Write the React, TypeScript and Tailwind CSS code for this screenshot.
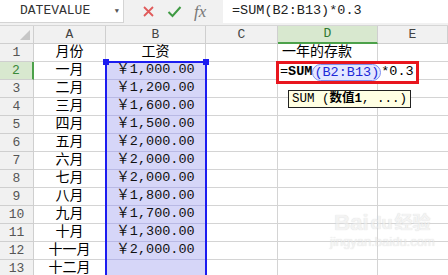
import React from "react";

const mono = { fontFamily: '"Liberation Mono", "Noto Sans CJK SC", monospace' };

const months = ["一月", "二月", "三月", "四月", "五月", "六月", "七月", "八月", "九月", "十月", "十一月", "十二月"];
const wages = ["1,000.00", "1,200.00", "1,600.00", "1,500.00", "2,000.00", "2,000.00", "2,000.00", "1,800.00", "1,700.00", "1,300.00", "2,000.00", ""];

const cols = ["A", "B", "C", "D", "E"];

function FormulaBar() {
  return (
    <div className="flex h-[26px] bg-[#f1f1f1] border-b border-[#d6d6d6]">
      <div className="flex h-[23px] w-[124px] items-center justify-between bg-white border-r border-b border-[#d4d4d4] pl-[20px] pr-[4px]">
        <span className="text-[13px] text-[#333]">DATEVALUE</span>
        <span className="text-[7px] text-[#555]">▼</span>
      </div>
      <div className="flex h-[23px] w-[99px] items-center gap-[12px] pl-[18px]">
        <svg width="13" height="13" viewBox="0 0 13 13">
          <path d="M2 2 L11 11 M11 2 L2 11" stroke="#e05a5a" strokeWidth="1.8" />
        </svg>
        <svg width="15" height="13" viewBox="0 0 15 13">
          <path d="M1.5 7 L5.5 11 L13.5 2" stroke="#3f9a43" strokeWidth="2" fill="none" />
        </svg>
        <span className="text-[17px] italic text-[#777]" style={{ fontFamily: '"Liberation Serif", serif' }}>
          fx
        </span>
      </div>
      <div className="flex h-[23px] flex-1 items-center bg-white pl-[9px]">
        <span className="text-[13.5px] text-[#222]">=SUM(B2:B13)*0.3</span>
      </div>
    </div>
  );
}

function Sheet() {
  return (
    <div className="relative grid grid-cols-[34px_72px_100px_72px_100px_70px] auto-rows-[18px]">
      {/* header row */}
      <div className="relative bg-[#f1f1f1] border-r border-b border-[#cfcfcf]">
        <svg className="absolute right-[3px] bottom-[3px]" width="10" height="10" viewBox="0 0 10 10">
          <path d="M10 0 L10 10 L0 10 Z" fill="#c6c6c6" />
        </svg>
      </div>
      {cols.map((c) =>
        c === "D" ? (
          <div key={c} className="flex items-center justify-center bg-[#d8e8cf] border-r border-[#cfcfcf] border-b-2 border-b-[#4ca14a] text-[13px] text-[#2f7a2f]">
            {c}
          </div>
        ) : (
          <div key={c} className="flex items-center justify-center bg-[#f1f1f1] border-r border-b border-[#cfcfcf] text-[13px] text-[#444]">
            {c}
          </div>
        )
      )}
      {Array.from({ length: 13 }).map((_, i) => {
        const r = i + 1;
        const inSel = r >= 2;
        return (
          <React.Fragment key={r}>
            {r === 2 ? (
              <div className="flex items-center justify-center bg-[#d8e8cf] border-r-2 border-r-[#4ca14a] border-b border-[#cfcfcf] text-[13px] text-[#3a8a3a]">
                {r}
              </div>
            ) : (
              <div className="flex items-center justify-center bg-[#f1f1f1] border-r border-b border-[#cfcfcf] text-[13px] text-[#555]">
                {r}
              </div>
            )}
            <div className="flex items-center justify-center border-r border-b border-[#d4d4d4] text-[14px] text-black">
              {r === 1 ? "月份" : months[r - 2]}
            </div>
            <div
              className={
                inSel
                  ? "flex items-center justify-center bg-[#d6d6f8] border-r border-b border-[#b9b9e4] text-[13.5px] text-[#111]"
                  : "flex items-center justify-center border-r border-b border-[#d4d4d4] text-[14px] text-black"
              }
            >
              {r === 1 ? "工资" : wages[r - 2] ? "￥" + wages[r - 2] : ""}
            </div>
            <div className="border-r border-b border-[#d4d4d4]" />
            <div className="flex items-center border-r border-b border-[#d4d4d4] pl-[4px] text-[14px] text-black">
              {r === 1 ? "一年的存款" : ""}
            </div>
            <div className="border-b border-[#d4d4d4]" />
          </React.Fragment>
        );
      })}

      {/* selection border B2:B13 */}
      <div className="pointer-events-none absolute left-[105px] top-[35px] h-[240px] w-[102px] border-2 border-[#1c1cf0]" />
      <div className="absolute left-[103px] top-[33px] h-[6px] w-[6px] bg-[#1c1cf0]" />
      <div className="absolute left-[203px] top-[33px] h-[6px] w-[6px] bg-[#1c1cf0]" />

      {/* active cell D2 edit with red highlight */}
      <div className="absolute left-[276px] top-[35px] h-[20px] w-[103px] border-2 border-[#4ca14a]" />
      <div className="absolute left-[276px] top-[35px] flex h-[23px] w-[143px] items-center border-[3px] border-[#e8161e] bg-white pl-[1px] text-[13.5px] text-black whitespace-nowrap">
        <span>=</span>
        <span className="font-bold">SUM</span>
        <span className="rounded-full border border-[#7f8ff0] bg-[#e3e8ff] px-[1px] leading-[15px] text-[#1d2ad8]">(B2:B13)</span>
        <span>*0.3</span>
      </div>

      {/* function tooltip */}
      <div className="absolute left-[288px] top-[64px] flex h-[18px] items-center border border-[#222] bg-[#ffffe3] pl-[3px] pr-[3px] text-[12.5px] text-black whitespace-nowrap">
        SUM (<span className="font-bold">数值1</span>, ...)
      </div>

      {/* watermark */}
      <div className="pointer-events-none absolute left-[330px] top-[186px] flex flex-col items-center opacity-60">
        <div className="flex items-end gap-[2px] text-[22px] font-bold leading-[22px] text-[#ececec]" style={{ fontFamily: '"Liberation Sans", "Noto Sans CJK SC", sans-serif', textShadow: "0 0 1px #bdbdbd" }}>
          <span>Bai</span>
          <span className="text-[18px]">du</span>
          <span className="text-[18px]">经验</span>
        </div>
        <div className="text-[13px] leading-[16px] text-[#ececec]" style={{ fontFamily: '"Liberation Sans", sans-serif', textShadow: "0 0 1px #c4c4c4" }}>
          jingyan.baidu.com
        </div>
      </div>
    </div>
  );
}

export default function App() {
  return (
    <div className="h-[275px] w-[448px] overflow-hidden bg-white" style={mono}>
      <FormulaBar />
      <Sheet />
    </div>
  );
}
